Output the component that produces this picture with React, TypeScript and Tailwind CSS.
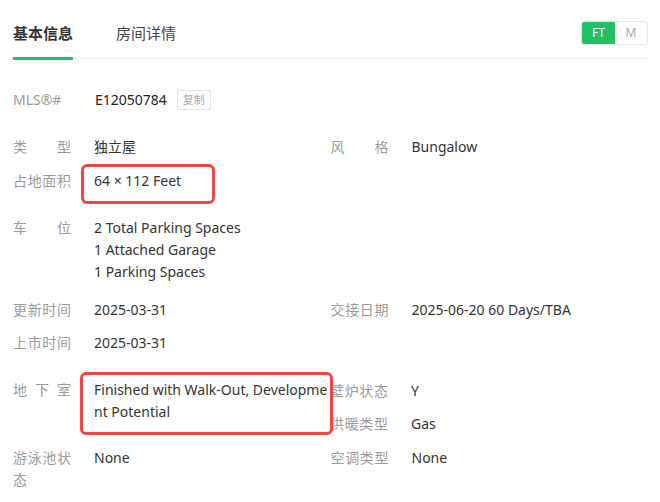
import React from "react";

const font = { fontFamily: '"Noto Sans", "Noto Sans CJK SC", sans-serif' };

function Label({ children }: { children: React.ReactNode }) {
  return (
    <div className="w-[81px] shrink-0">
      <div className="w-[58px] text-[#9a9a9a] [text-align:justify] [text-align-last:justify]">{children}</div>
    </div>
  );
}

function Item({ label, children, className = "" }: { label: React.ReactNode; children: React.ReactNode; className?: string }) {
  return (
    <div className={"flex w-[318px] " + className}>
      <Label>{label}</Label>
      <div className="flex-1 text-[#333] break-all">{children}</div>
    </div>
  );
}

export default function App() {
  return (
    <div className="relative w-[660px] h-[502px] bg-white overflow-hidden text-[14px] leading-[22px]" style={font}>
      <div className="pl-[13px] pr-[12px]">
        {/* header */}
        <div className="flex items-start justify-between border-b border-[#ececec]">
          <div className="flex items-start">
            <div className="pt-[22px] pb-[13px] border-b-[3px] border-[#22c065] -mb-[2px] text-[15px] leading-[22px] font-bold text-[#333]">
              基本信息
            </div>
            <div className="pt-[22px] ml-[43px] text-[15px] leading-[22px] text-[#444]">房间详情</div>
          </div>
          <div className="mt-[21px] flex h-[24px] rounded-[3px] border border-[#e6e6e6] overflow-hidden text-[12px]">
            <div className="w-[33px] flex items-center justify-center bg-[#22c065] text-white">FT</div>
            <div className="w-[32px] flex items-center justify-center text-[#aaa]">M</div>
          </div>
        </div>

        {/* MLS */}
        <div className="mt-[30px] flex items-center">
          <div className="w-[82px] text-[#9a9a9a]">MLS®#</div>
          <div className="text-[#222]">E12050784</div>
          <div className="ml-[10px] h-[20px] px-[5px] flex items-center border border-[#e2e2e2] rounded-[2px] text-[11px] text-[#aaa]">
            复制
          </div>
        </div>

        <div className="mt-[25px] flex">
          <Item label="类型">独立屋</Item>
          <Item label="风格">Bungalow</Item>
        </div>

        <div className="mt-[12px] flex">
          <Item label="占地面积">64 × 112 Feet</Item>
        </div>

        <div className="mt-[25px] flex">
          <Item label="车位">
            <div>2 Total Parking Spaces</div>
            <div>1 Attached Garage</div>
            <div>1 Parking Spaces</div>
          </Item>
        </div>

        <div className="mt-[16px] flex">
          <Item label="更新时间">2025-03-31</Item>
          <Item label="交接日期">2025-06-20 60 Days/TBA</Item>
        </div>

        <div className="mt-[11px] flex">
          <Item label="上市时间">2025-03-31</Item>
        </div>

        <div className="mt-[25px] flex">
          <Item label="地下室">Finished with Walk-Out, Development Potential</Item>
          <div className="flex flex-col gap-[11px] pt-[1px]">
            <Item label="壁炉状态">Y</Item>
            <Item label="供暖类型">Gas</Item>
          </div>
        </div>

        <div className="mt-[12px] flex">
          <Item label="游泳池状态">None</Item>
          <Item label="空调类型">None</Item>
        </div>
      </div>

      {/* annotation boxes */}
      <div className="absolute left-[81px] top-[164px] w-[134px] h-[40px] border-[3px] border-[#f04646] rounded-[6px]" />
      <div className="absolute left-[80px] top-[372px] w-[253px] h-[63px] border-[3px] border-[#f04646] rounded-[6px]" />
    </div>
  );
}
